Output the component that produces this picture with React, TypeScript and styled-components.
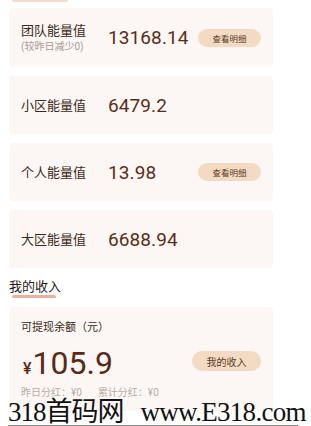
import React from "react";
import styled, { createGlobalStyle } from "styled-components";

const GlobalStyle = createGlobalStyle`
  html, body {
    margin: 0;
    padding: 0;
    background: #ffffff;
  }
  body {
    font-family: Roboto, "Noto Sans CJK SC", sans-serif;
    color: #3b2a20;
  }
`;

const Page = styled.div`
  position: relative;
  width: 311px;
  height: 426px;
  overflow: hidden;
  padding-left: 9px;
  box-sizing: border-box;
`;

const TopBar = styled.div`
  width: 56px;
  height: 2px;
  margin-left: 3px;
  background: #f3dccb;
  border-radius: 0 0 2px 2px;
`;

const List = styled.div`
  width: 264px;
  margin-top: 6px;
  display: flex;
  flex-direction: column;
  gap: 9px;
`;

const Card = styled.div<{ $tall?: boolean }>`
  height: ${(p) => (p.$tall ? 59 : 58)}px;
  background: #fcf7f4;
  border-radius: 4px;
  display: flex;
  align-items: center;
  padding: 0 12px;
  box-sizing: border-box;
`;

const LabelBox = styled.div`
  width: 87px;
  display: flex;
  flex-direction: column;
`;

const Label = styled.div`
  font-size: 13px;
  line-height: 17px;
  color: #3b2a20;
`;

const SubLabel = styled.div`
  font-size: 10px;
  line-height: 14px;
  margin-top: 1px;
  color: #a99c94;
`;

const Value = styled.div`
  flex: 1;
  font-size: 19px;
  color: #5a2d18;
  letter-spacing: 0.1px;
`;

const Pill = styled.div<{ $w: number; $h: number; $fs: number }>`
  width: ${(p) => p.$w}px;
  height: ${(p) => p.$h}px;
  border-radius: ${(p) => p.$h / 2}px;
  background: #f3dbc3;
  color: #5a3a28;
  font-size: ${(p) => p.$fs}px;
  display: flex;
  align-items: center;
  justify-content: center;
  flex-shrink: 0;
`;

const Heading = styled.div`
  margin-top: 11px;
  font-size: 13px;
  line-height: 16px;
  color: #1f1a17;
`;

const Underline = styled.div`
  width: 44px;
  height: 3px;
  margin-left: 3px;
  border-radius: 2px;
  background: #eab29a;
`;

const IncomeCard = styled.div`
  width: 264px;
  margin-top: 9px;
  background: #fcf7f4;
  border-radius: 4px;
  padding: 14px 12px 12px;
  box-sizing: border-box;
`;

const IncomeLabel = styled.div`
  font-size: 11px;
  line-height: 14px;
  color: #3b2a20;
`;

const AmountRow = styled.div`
  margin-top: 10px;
  height: 36px;
  display: flex;
  align-items: flex-start;
`;

const Amount = styled.div`
  flex: 1;
  display: flex;
  align-items: baseline;
  color: #5a2a16;
  line-height: 36px;
`;

const Yen = styled.span`
  font-size: 16px;
  font-weight: 500;
  margin-left: 2px;
  margin-right: 1px;
`;

const Big = styled.span`
  font-size: 32px;
`;

const PillSpacer = styled.div`
  margin-top: 6px;
`;

const Stats = styled.div`
  margin-top: 5px;
  display: flex;
  gap: 16px;
  font-size: 10px;
  line-height: 13px;
  color: #b8aaa1;
`;

const Watermark = styled.div`
  position: absolute;
  left: 8px;
  top: 399px;
  width: 290px;
  height: 26px;
  border-bottom: 1px solid #8a8a8a;
  font-family: "Liberation Serif", "Noto Sans CJK SC", serif;
  font-size: 27px;
  line-height: 26px;
  color: #111111;
  white-space: nowrap;
  display: flex;
  gap: 17px;
`;

const MarkPart = styled.span<{ $ls: number }>`
  letter-spacing: ${(p) => p.$ls}px;
`;

const rows = [
  { label: "团队能量值", sub: "(较昨日减少0)", value: "13168.14", button: true },
  { label: "小区能量值", value: "6479.2" },
  { label: "个人能量值", value: "13.98", button: true },
  { label: "大区能量值", value: "6688.94" },
];

export default function App() {
  return (
    <>
      <GlobalStyle />
      <Page>
        <TopBar />
        <List>
          {rows.map((r, i) => (
            <Card key={r.label} $tall={i === 0}>
              <LabelBox>
                <Label>{r.label}</Label>
                {r.sub && <SubLabel>{r.sub}</SubLabel>}
              </LabelBox>
              <Value>{r.value}</Value>
              {r.button && (
                <Pill $w={63} $h={18} $fs={8.5}>
                  查看明细
                </Pill>
              )}
            </Card>
          ))}
        </List>
        <Heading>我的收入</Heading>
        <Underline />
        <IncomeCard>
          <IncomeLabel>可提现余额（元）</IncomeLabel>
          <AmountRow>
            <Amount>
              <Yen>¥</Yen>
              <Big>105.9</Big>
            </Amount>
            <PillSpacer>
              <Pill $w={69} $h={20} $fs={10}>
                我的收入
              </Pill>
            </PillSpacer>
          </AmountRow>
          <Stats>
            <span>昨日分红：¥0</span>
            <span>累计分红：¥0</span>
          </Stats>
        </IncomeCard>
        <Watermark>
          <MarkPart $ls={-1}>318首码网</MarkPart>
          <MarkPart $ls={-0.7}>www.E318.com</MarkPart>
        </Watermark>
      </Page>
    </>
  );
}
